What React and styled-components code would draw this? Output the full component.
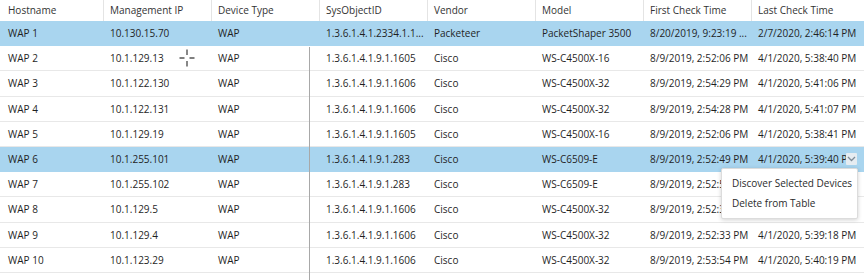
import React from 'react'
import styled, { createGlobalStyle } from 'styled-components'

const GlobalStyle = createGlobalStyle`
  body {
    margin: 0;
    background: #fff;
    font-family: "Open Sans", "Liberation Sans", sans-serif;
  }
`

const columns = ['Hostname', 'Management IP', 'Device Type', 'SysObjectID', 'Vendor', 'Model', 'First Check Time', 'Last Check Time']

const rows = [
  ['WAP 1', '10.130.15.70', 'WAP', '1.3.6.1.4.1.2334.1.1...', 'Packeteer', 'PacketShaper 3500', '8/20/2019, 9:23:19 ...', '2/7/2020, 2:46:14 PM'],
  ['WAP 2', '10.1.129.13', 'WAP', '1.3.6.1.4.1.9.1.1605', 'Cisco', 'WS-C4500X-16', '8/9/2019, 2:52:06 PM', '4/1/2020, 5:38:40 PM'],
  ['WAP 3', '10.1.122.130', 'WAP', '1.3.6.1.4.1.9.1.1606', 'Cisco', 'WS-C4500X-32', '8/9/2019, 2:54:29 PM', '4/1/2020, 5:41:06 PM'],
  ['WAP 4', '10.1.122.131', 'WAP', '1.3.6.1.4.1.9.1.1606', 'Cisco', 'WS-C4500X-32', '8/9/2019, 2:54:28 PM', '4/1/2020, 5:41:07 PM'],
  ['WAP 5', '10.1.129.19', 'WAP', '1.3.6.1.4.1.9.1.1605', 'Cisco', 'WS-C4500X-16', '8/9/2019, 2:52:06 PM', '4/1/2020, 5:38:41 PM'],
  ['WAP 6', '10.1.255.101', 'WAP', '1.3.6.1.4.1.9.1.283', 'Cisco', 'WS-C6509-E', '8/9/2019, 2:52:49 PM', '4/1/2020, 5:39:40 P'],
  ['WAP 7', '10.1.255.102', 'WAP', '1.3.6.1.4.1.9.1.283', 'Cisco', 'WS-C6509-E', '8/9/2019, 2:52:5', ''],
  ['WAP 8', '10.1.129.5', 'WAP', '1.3.6.1.4.1.9.1.1606', 'Cisco', 'WS-C4500X-32', '8/9/2019, 2:52:3', ''],
  ['WAP 9', '10.1.129.4', 'WAP', '1.3.6.1.4.1.9.1.1606', 'Cisco', 'WS-C4500X-32', '8/9/2019, 2:52:33 PM', '4/1/2020, 5:39:18 PM'],
  ['WAP 10', '10.1.123.29', 'WAP', '1.3.6.1.4.1.9.1.1606', 'Cisco', 'WS-C4500X-32', '8/9/2019, 2:53:54 PM', '4/1/2020, 5:40:19 PM'],
]

const selected = [0, 5]
const menuRow = 5

const App = () => {
  return <Page>
    <GlobalStyle />
    <Table>
      <HeaderRow>
        {columns.map((c) => <HeaderCell key={c}>{c}</HeaderCell>)}
      </HeaderRow>
      {rows.map((r, i) => (
        <Row key={i} $selected={selected.includes(i)}>
          {r.map((v, j) => (
            <Cell key={j}>
              {v}
              {i === menuRow && j === r.length - 1 && (
                <MenuButton>
                  <svg width="9" height="6" viewBox="0 0 9 6">
                    <path d="M1 1l3.5 3.5L8 1" fill="none" stroke="#7d8b97" strokeWidth="1.3" />
                  </svg>
                </MenuButton>
              )}
            </Cell>
          ))}
        </Row>
      ))}
    </Table>

    <ResizeLine />

    <Cursor width="18" height="20" viewBox="0 0 18 20">
      <g stroke="#555" strokeWidth="1.4">
        <path d="M1.5 10h5M11.5 10h5" />
        <path d="M9 1.5v5.5M9 13v5.5" />
      </g>
    </Cursor>

    <Menu>
      <MenuItem>Discover Selected Devices</MenuItem>
      <MenuItem>Delete from Table</MenuItem>
    </Menu>
  </Page>
}

const Page = styled.div`
  position: relative;
  width: 864px;
  height: 280px;
  overflow: hidden;
  background: #fff;
`

const Table = styled.div`
  display: flex;
  flex-direction: column;
  padding-left: 2px;
`

const HeaderRow = styled.div`
  display: grid;
  grid-template-columns: 102px repeat(6, 108px) 1fr;
  height: 21px;
  align-items: stretch;
`

const HeaderCell = styled.div`
  display: flex;
  align-items: center;
  padding: 0 6px 2px;
  font-size: 10px;
  color: #333;
  border-right: 1px solid #e4e4e4;
  white-space: nowrap;

  &:last-child {
    border-right: none;
  }
`

const Row = styled.div`
  display: grid;
  grid-template-columns: 102px repeat(6, 108px) 1fr;
  height: 25.2px;
  margin-left: -2px;
  padding-left: 2px;
  box-sizing: border-box;
  background: ${(p) => (p.$selected ? '#a9d5ef' : '#fff')};
  border-bottom: 1px solid ${(p) => (p.$selected ? '#a9d5ef' : '#e8e8e8')};
`

const Cell = styled.div`
  position: relative;
  display: flex;
  align-items: center;
  padding: 0 6px;
  font-size: 10px;
  color: #1f1f1f;
  white-space: nowrap;
  overflow: hidden;
`

const MenuButton = styled.div`
  position: absolute;
  right: 7px;
  top: 50%;
  transform: translateY(-50%);
  width: 11px;
  height: 12px;
  display: flex;
  align-items: center;
  justify-content: center;
  background: #e6ecf1;
  border-radius: 1px;
`

const ResizeLine = styled.div`
  position: absolute;
  left: 309px;
  top: 47px;
  bottom: 0;
  width: 1px;
  background: #a8a8a8;
`

const Cursor = styled.svg`
  position: absolute;
  left: 178px;
  top: 48px;
`

const Menu = styled.div`
  position: absolute;
  left: 721px;
  top: 168px;
  width: 137px;
  height: 51px;
  box-sizing: border-box;
  padding-top: 4px;
  display: flex;
  flex-direction: column;
  background: #fff;
  border: 1px solid #dcdcdc;
  border-radius: 2px;
  box-shadow: 0 1px 4px rgba(0, 0, 0, 0.18);
`

const MenuItem = styled.div`
  height: 20px;
  display: flex;
  align-items: center;
  padding-left: 10px;
  font-size: 10px;
  color: #2b2b2b;
  white-space: nowrap;
`

export default App
